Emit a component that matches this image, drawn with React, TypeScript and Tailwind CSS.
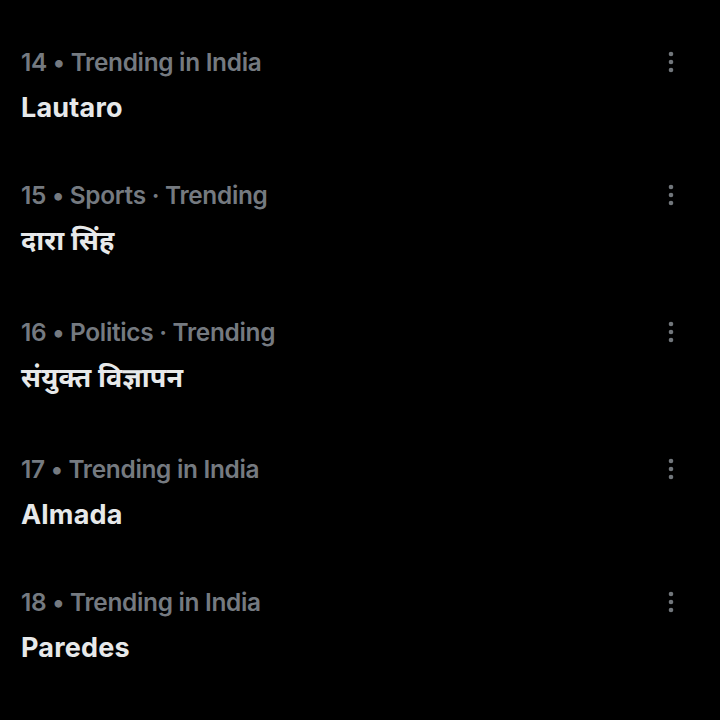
const trends = [
  { rank: 14, meta: "Trending in India", title: "Lautaro", tall: false },
  { rank: 15, meta: "Sports · Trending", title: "दारा सिंह", tall: true },
  { rank: 16, meta: "Politics · Trending", title: "संयुक्त विज्ञापन", tall: true },
  { rank: 17, meta: "Trending in India", title: "Almada", tall: false },
  { rank: 18, meta: "Trending in India", title: "Paredes", tall: false },
];

function MoreIcon() {
  return (
    <svg width="6" height="22" viewBox="0 0 6 22" className="text-[#71767b]">
      <circle cx="3" cy="3" r="2.3" fill="currentColor" />
      <circle cx="3" cy="11" r="2.3" fill="currentColor" />
      <circle cx="3" cy="19" r="2.3" fill="currentColor" />
    </svg>
  );
}

export default function App() {
  return (
    <div
      className="w-[720px] h-[720px] bg-black overflow-hidden pt-[23px]"
      style={{ fontFamily: '"Inter", "Noto Sans Devanagari", "Noto Sans", sans-serif' }}
    >
      {trends.map((t) => (
        <div
          key={t.rank}
          className={`flex flex-row justify-between pl-[21px] pr-[46px] pt-[23px] ${t.tall ? "pb-[34px]" : "pb-[30px]"}`}
        >
          <div className="flex flex-col gap-[12px]">
            <div className="h-[32px] leading-[32px] text-[24.4px] text-[#757a80] font-semibold tracking-[-0.3px]">
              {t.rank} • {t.meta}
            </div>
            <div className="h-[36px] leading-[36px] text-[27px] text-[#e7e9ea] font-bold tracking-[0.2px]">
              {t.title}
            </div>
          </div>
          <div className="h-[32px] flex items-center">
            <MoreIcon />
          </div>
        </div>
      ))}
    </div>
  );
}
